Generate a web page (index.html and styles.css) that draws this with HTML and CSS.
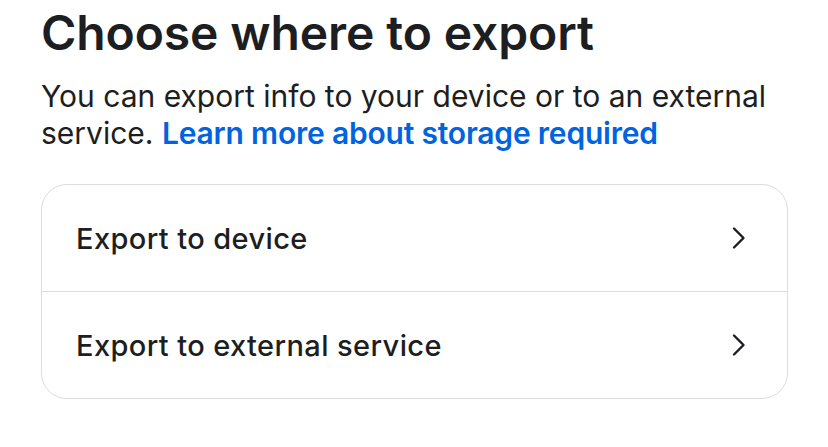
FILE: index.html
```html
<!DOCTYPE html>
<html lang="en">
<head>
    <meta charset="UTF-8">
    <meta name="viewport" content="width=device-width, initial-scale=1.0">
    <title>Choose where to export</title>
    <link rel="stylesheet" href="styles.css">
</head>
<body>
    <div class="page">
        <h1 class="title">Choose where to export</h1>
        <p class="intro">
            You can export info to your device or to an external
            service. <a href="#" class="link">Learn more about storage required</a>
        </p>

        <div class="options">
            <a href="#" class="option">
                <span>Export to device</span>
                <svg class="chevron" viewBox="0 0 16 24" width="16" height="24">
                    <path d="M3 2.5 L12.5 12 L3 21.5" fill="none" stroke="#1c1e21" stroke-width="2.4" stroke-linecap="round" stroke-linejoin="round"/>
                </svg>
            </a>
            <a href="#" class="option">
                <span>Export to external service</span>
                <svg class="chevron" viewBox="0 0 16 24" width="16" height="24">
                    <path d="M3 2.5 L12.5 12 L3 21.5" fill="none" stroke="#1c1e21" stroke-width="2.4" stroke-linecap="round" stroke-linejoin="round"/>
                </svg>
            </a>
        </div>
    </div>
</body>
</html>
```

FILE: styles.css
```css
body {
    margin: 0;
    background: #ffffff;
    font-family: 'Inter', 'Noto Sans', sans-serif;
    color: #1c1e21;
}

.page {
    padding: 3px 40px 0 41px;
}

.title {
    margin: 0;
    font-size: 48px;
    font-weight: 600;
    line-height: 60px;
    letter-spacing: -0.1px;
}

.intro {
    margin: 15px 0 0;
    font-size: 30px;
    line-height: 37px;
    color: #1c1e21;
}

.link {
    color: #0064e0;
    font-weight: 600;
    letter-spacing: -0.2px;
    text-decoration: none;
}

.options {
    margin-top: 32px;
    border: 1.5px solid #dadde1;
    border-radius: 26px;
    overflow: hidden;
}

.option {
    display: flex;
    align-items: center;
    justify-content: space-between;
    height: 106px;
    padding: 0 40px 0 34px;
    font-size: 29px;
    font-weight: 500;
    letter-spacing: 0.4px;
    color: #1c1e21;
    text-decoration: none;
}

.option + .option {
    border-top: 1.5px solid #dadde1;
}

.chevron {
    display: block;
}
```
